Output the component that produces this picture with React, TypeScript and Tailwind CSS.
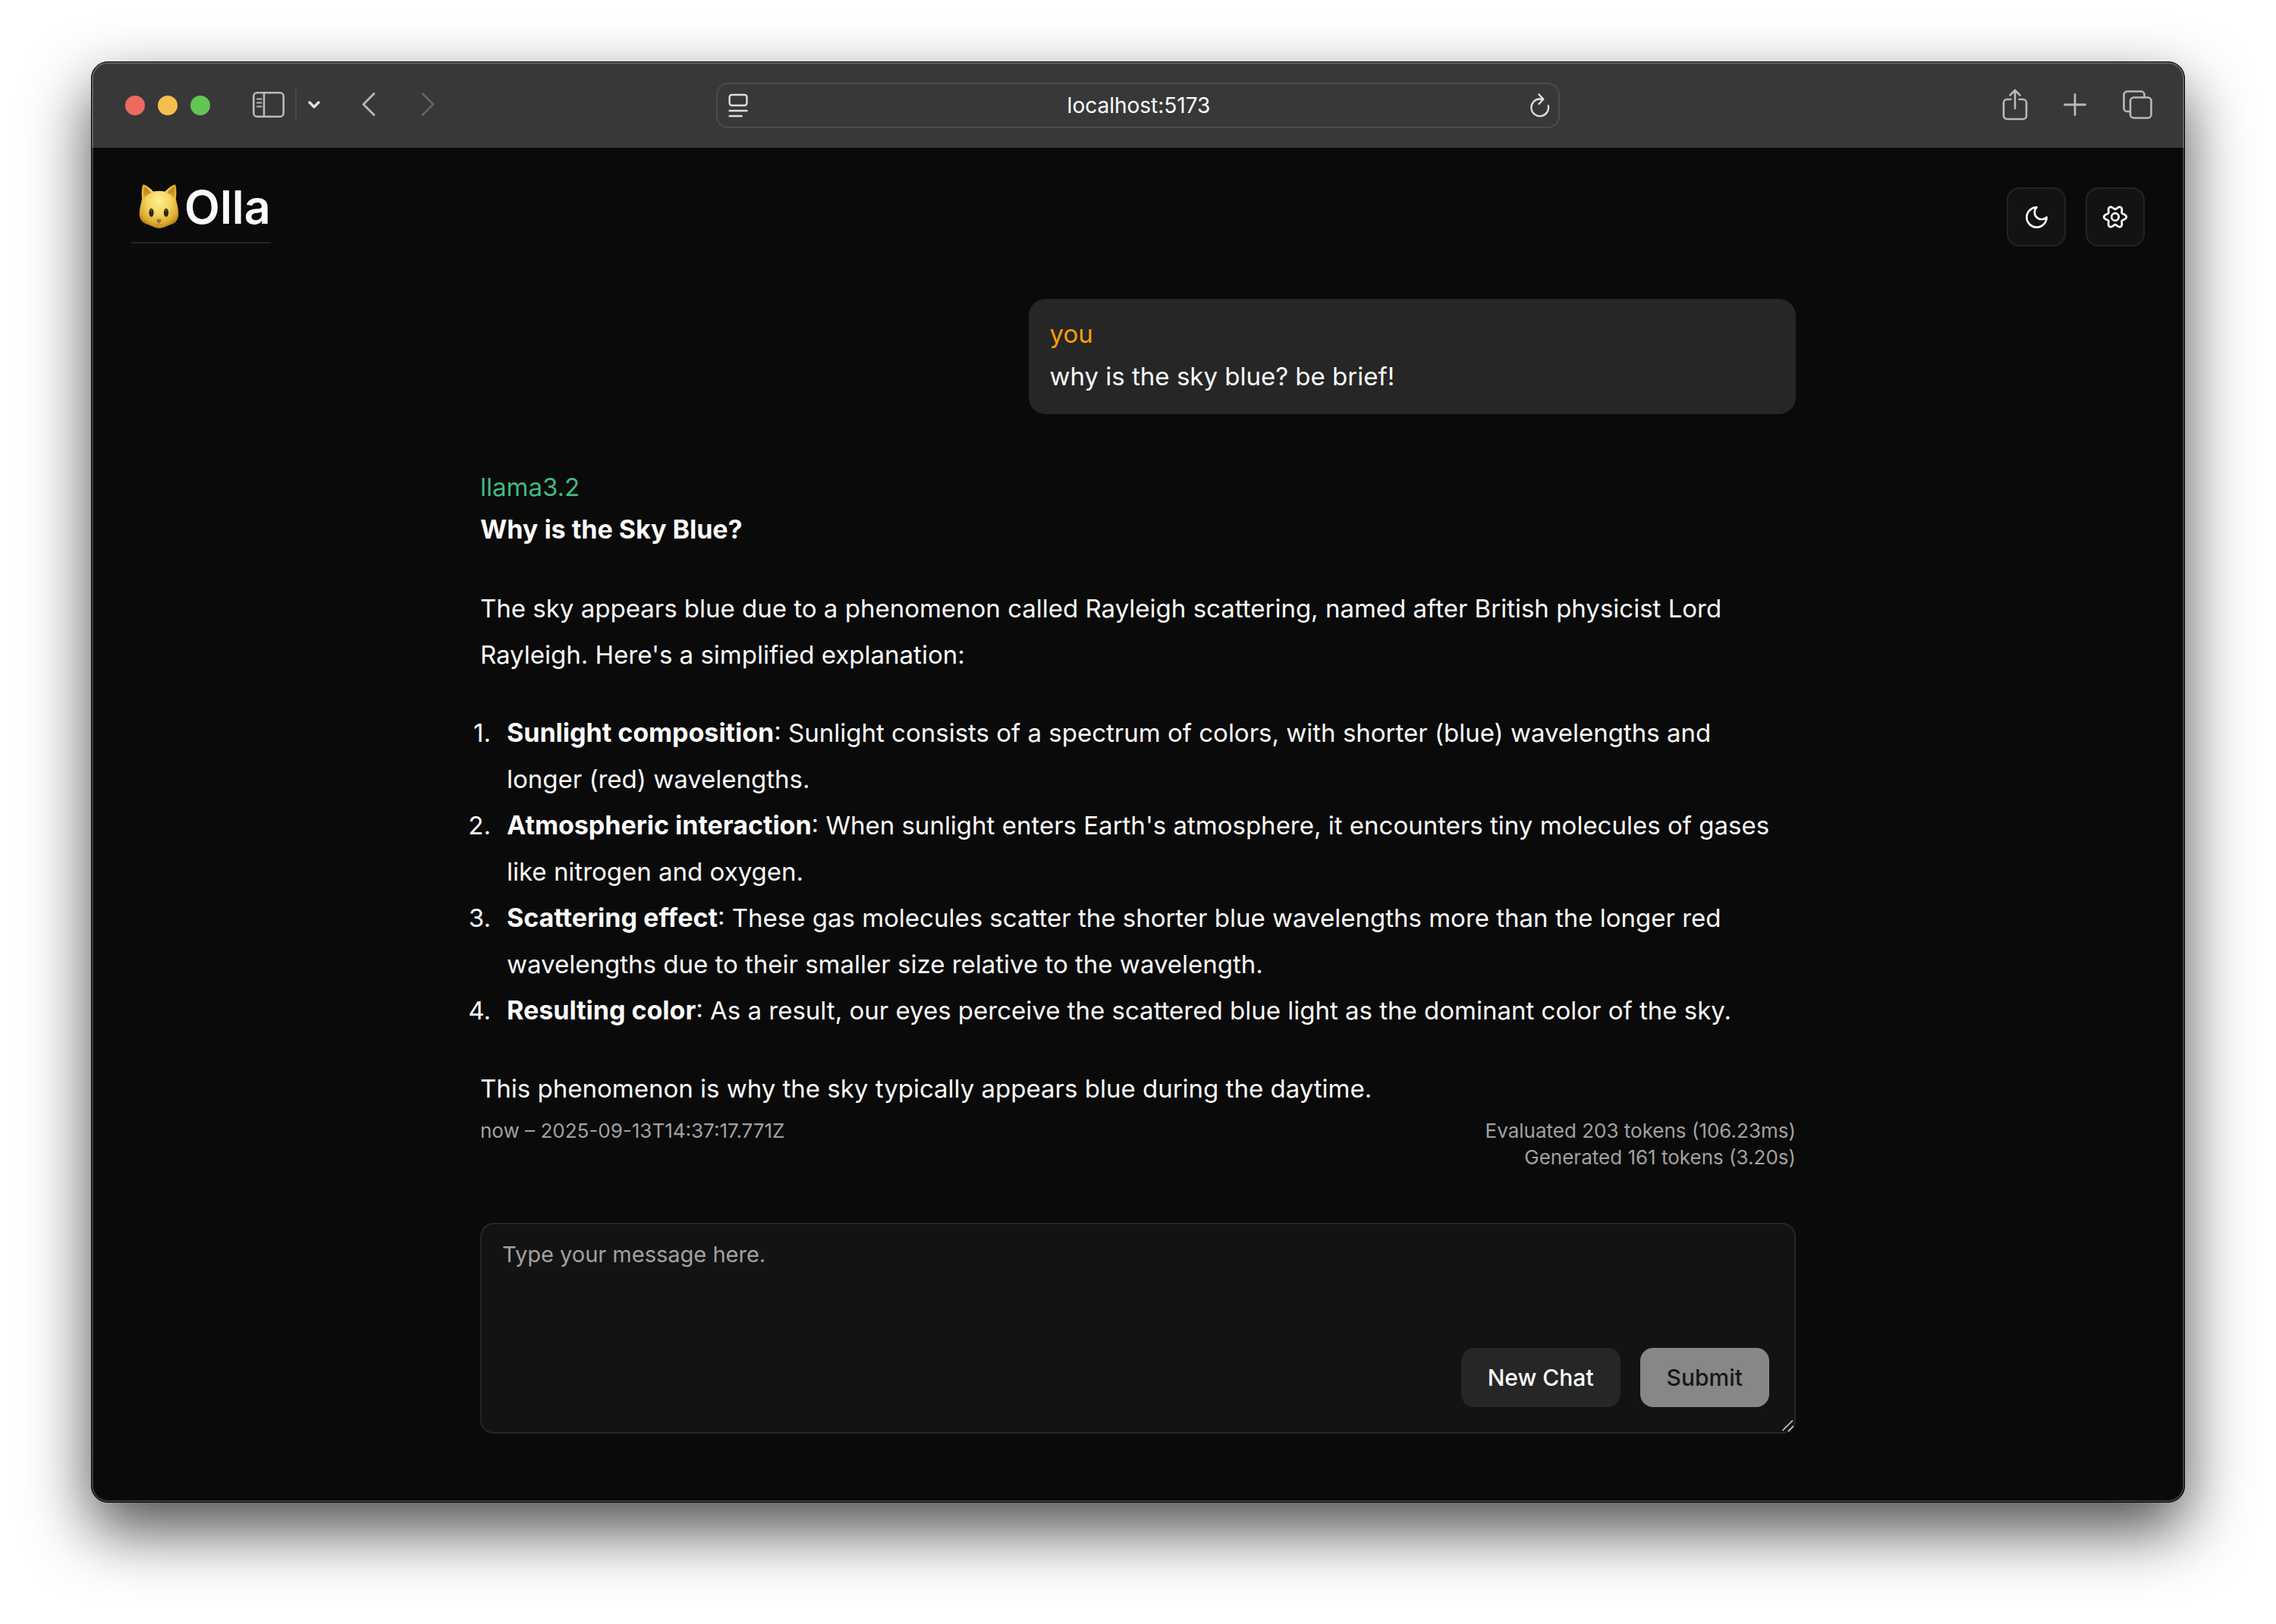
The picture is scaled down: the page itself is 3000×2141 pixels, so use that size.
import React from "react";

const steps = [
  {
    title: "Sunlight composition",
    text: "Sunlight consists of a spectrum of colors, with shorter (blue) wavelengths and longer (red) wavelengths.",
  },
  {
    title: "Atmospheric interaction",
    text: "When sunlight enters Earth's atmosphere, it encounters tiny molecules of gases like nitrogen and oxygen.",
  },
  {
    title: "Scattering effect",
    text: "These gas molecules scatter the shorter blue wavelengths more than the longer red wavelengths due to their smaller size relative to the wavelength.",
  },
  {
    title: "Resulting color",
    text: "As a result, our eyes perceive the scattered blue light as the dominant color of the sky.",
  },
];

/* Six-lobed outline of the settings icon, centred on 17,17. */
const gearPath =
  Array.from({ length: 120 }, (_, i) => {
    const a = (i * Math.PI) / 60;
    const r = 12.5 + 2.3 * Math.cos(6 * a);
    return `${i === 0 ? "M" : "L"}${(17 + r * Math.cos(a)).toFixed(2)} ${(17 + r * Math.sin(a)).toFixed(2)}`;
  }).join("") + "Z";

function CatLogo() {
  return (
    <svg className="h-[54px] w-[58px] overflow-visible" viewBox="0 0 58 54" aria-hidden="true">
      <defs>
        <radialGradient id="catFace" cx="0.5" cy="0.38" r="0.62">
          <stop offset="0" stopColor="#fdf08e" />
          <stop offset="0.5" stopColor="#f3d45c" />
          <stop offset="0.85" stopColor="#dca92e" />
          <stop offset="1" stopColor="#b98220" />
        </radialGradient>
        <linearGradient id="catEar" x1="0" y1="0" x2="0" y2="1">
          <stop offset="0" stopColor="#b87d17" />
          <stop offset="1" stopColor="#d9a835" />
        </linearGradient>
      </defs>
      <path
        d="M7.6-3.6C8.6-4.6 17.5 1 21 5.6C26 4.4 32 4.4 36.6 5.6C40.5 1 49-4.6 50-3.6C51.5-2 52 8 50.8 15C52 21 54.2 28 54.2 35C54.2 42 51 46.5 45.5 48.5C40 50 35 54 29 54C23 54 18.5 50 12.5 48.5C6.5 46.5 2.7 42 2.7 35C2.7 28 5 21 6.2 15C5 8 6-2 7.6-3.6Z"
        fill="url(#catFace)"
      />
      <path d="M9.5-0.5C13 1.5 16.5 4.2 18.5 7C14.5 9 11 11.5 8.8 14.5C8 9 8.3 3.5 9.5-0.5Z" fill="url(#catEar)" />
      <path d="M48.2-0.5C44.7 1.5 41.2 4.2 39.2 7C43.2 9 46.5 11.5 48.7 14.5C49.5 9 49.3 3.5 48.2-0.5Z" fill="url(#catEar)" />
      <ellipse cx="18.5" cy="33.3" rx="3.1" ry="5.5" fill="#2b2510" />
      <ellipse cx="38" cy="33.3" rx="3.1" ry="5.5" fill="#2b2510" />
      <ellipse cx="18.3" cy="30.5" rx="1.2" ry="1.6" fill="#5f5638" />
      <ellipse cx="37.8" cy="30.5" rx="1.2" ry="1.6" fill="#5f5638" />
      <path d="M25.3 43C25.3 41.4 31.7 41.4 31.7 43C31.7 45 29.5 47 28.5 47C27.5 47 25.3 45 25.3 43Z" fill="#8d7443" />
      <path d="M28.5 47C28.5 49 26 50 24 49M28.5 47C28.5 49 31 50 33 49" fill="none" stroke="#b58a2c" strokeWidth="0.9" />
      <path d="M11 44L3.5 49M14 46.5L7 53M46 44L53.5 49M43 46.5L50 53" fill="none" stroke="#6d4f16" strokeWidth="0.7" opacity="0.6" />
    </svg>
  );
}

function Toolbar() {
  return (
    <header className="grid h-[114px] grid-cols-[1fr_minmax(0,1112px)_1fr] items-center border-b border-black bg-[#383838] px-11 text-[#b9b9b9]">
      <div className="flex items-center">
        <div className="flex gap-[17px]">
          <button type="button" aria-label="Close" className="size-[26px] rounded-full bg-[#ed6a5f]" />
          <button type="button" aria-label="Minimize" className="size-[26px] rounded-full bg-[#f5bf4f]" />
          <button type="button" aria-label="Zoom" className="size-[26px] rounded-full bg-[#62c554]" />
        </div>
        <div className="flex items-center pb-0.5">
          <button type="button" aria-label="Sidebar" className="ml-14">
            <svg className="h-[34px] w-[42px]" viewBox="0 0 42 34" fill="none" stroke="currentColor" strokeWidth="2.6">
              <rect x="1.3" y="1.3" width="39.4" height="31.4" rx="4.5" />
              <path d="M15 1v32" />
              <path d="M6 9.5h5.5M6 14.5h5.5M6 19.5h5.5" strokeWidth="2" strokeLinecap="round" />
            </svg>
          </button>
          <span className="ml-3.5 h-10 border-l-2 border-[#4a4a4a]" />
          <button type="button" aria-label="Sidebar menu" className="ml-3.5 text-[#e2e2e2]">
            <svg className="h-3 w-[18px]" viewBox="0 0 18 12" fill="none" stroke="currentColor" strokeWidth="3.4" strokeLinecap="round" strokeLinejoin="round">
              <path d="M3 3l6 6 6-6" />
            </svg>
          </button>
          <button type="button" aria-label="Back" className="ml-[53px]">
            <svg className="h-[34px] w-5" viewBox="0 0 20 34" fill="none" stroke="currentColor" strokeWidth="2.8" strokeLinecap="round" strokeLinejoin="round">
              <path d="M17 2.5L3 16.5 17 30.5" />
            </svg>
          </button>
          <button type="button" aria-label="Forward" disabled className="ml-[58px] text-[#626262]">
            <svg className="h-[34px] w-5" viewBox="0 0 20 34" fill="none" stroke="currentColor" strokeWidth="2.8" strokeLinecap="round" strokeLinejoin="round">
              <path d="M3 2.5l14 14-14 14" />
            </svg>
          </button>
        </div>
      </div>
      <div className="flex h-[60px] items-center rounded-2xl border-2 border-[#4d4d4d] px-3.5 text-[#dedede]">
        <button type="button" aria-label="Page settings">
          <svg className="h-8 w-[26px]" viewBox="0 0 26 32" fill="none" stroke="currentColor" strokeWidth="2.4" strokeLinecap="round">
            <rect x="1.6" y="2" width="22.8" height="14" rx="3" />
            <path d="M1.6 23h22.8M1.6 30h16" />
          </svg>
        </button>
        <input
          aria-label="Address"
          defaultValue="localhost:5173"
          className="min-w-0 flex-1 bg-transparent text-center text-[28px] leading-9 text-white outline-none"
        />
        <button type="button" aria-label="Reload" className="-mr-1">
          <svg className="h-[34px] w-7" viewBox="0 0 28 34" fill="none" stroke="currentColor" strokeWidth="2.4" strokeLinecap="round" strokeLinejoin="round">
            <path d="M24.8 17.5A11.3 11.3 0 1 1 13.5 8.5L18 8.8" />
            <path d="M12.5 2.5L18.3 8.8 12.5 15" />
          </svg>
        </button>
      </div>
      <div className="-mr-0.5 flex items-center justify-end pb-0.5">
        <button type="button" aria-label="Share">
          <svg className="h-[42px] w-[34px]" viewBox="0 0 34 42" fill="none" stroke="currentColor" strokeWidth="2.6" strokeLinecap="round" strokeLinejoin="round">
            <path d="M11.5 14H6.5A4.5 4.5 0 0 0 2 18.5V35.5A4.5 4.5 0 0 0 6.5 40H27.5A4.5 4.5 0 0 0 32 35.5V18.5A4.5 4.5 0 0 0 27.5 14H22.5" />
            <path d="M17 26V2.5M10.5 8.5L17 2 23.5 8.5" />
          </svg>
        </button>
        <button type="button" aria-label="New tab" className="ml-[47px]">
          <svg className="size-[30px]" viewBox="0 0 30 30" fill="none" stroke="currentColor" strokeWidth="2.8" strokeLinecap="round">
            <path d="M15 1.5v27M1.5 15h27" />
          </svg>
        </button>
        <button type="button" aria-label="Tabs" className="ml-12">
          <svg className="h-[38px] w-[39px]" viewBox="0 0 39 38" fill="none" stroke="currentColor" strokeWidth="2.6" strokeLinejoin="round">
            <rect x="10" y="9.5" width="27.5" height="27" rx="4.5" />
            <path d="M10 28H6A4.5 4.5 0 0 1 1.5 23.5V6A4.5 4.5 0 0 1 6 1.5H24A4.5 4.5 0 0 1 28.5 6V9.5" />
          </svg>
        </button>
      </div>
    </header>
  );
}

function IconButton({ label, children }: { label: string; children: React.ReactNode }) {
  return (
    <button
      type="button"
      aria-label={label}
      className="flex size-[78px] items-center justify-center rounded-[17px] border-2 border-[#242424] bg-[#131313] text-white"
    >
      {children}
    </button>
  );
}

export default function App() {
  return (
    <div className="min-h-screen overflow-hidden bg-white px-[120px] pt-[81px] pb-[159px] font-['Inter',sans-serif] text-[#fafafa]">
      <div className="relative overflow-hidden rounded-[22px] border border-black bg-[#0a0a0a] shadow-[0_36px_84px_rgba(0,0,0,0.7)]">
        <Toolbar />

        <div className="flex items-start justify-between px-[52px] pt-[51px]">
          <h1 className="flex items-start gap-1 border-b-2 border-[#242424] pb-[18px] pl-2 text-[61px] leading-[52px] font-semibold">
            <CatLogo />
            <span>Olla</span>
          </h1>
          <div className="flex gap-[26px]">
            <IconButton label="Toggle theme">
              <svg className="size-[35px]" viewBox="0 0 24 24" fill="none" stroke="currentColor" strokeWidth="1.8" strokeLinecap="round" strokeLinejoin="round">
                <path d="M12 3a6 6 0 0 0 9 9 9 9 0 1 1-9-9Z" />
              </svg>
            </IconButton>
            <IconButton label="Settings">
              <svg className="size-[34px]" viewBox="0 0 34 34" fill="none" stroke="currentColor" strokeWidth="2.7" strokeLinejoin="round">
                <path d={gearPath} />
                <circle cx="17" cy="17" r="4.8" />
              </svg>
            </IconButton>
          </div>
        </div>

        <main className="mx-auto max-w-[1734px] pt-[69px] pb-[90px] text-[33px]">
          <section className="ml-auto w-7/12 rounded-[22px] bg-[#262626] px-7 pt-[18px] pb-[22px] leading-[56px]">
            <p className="text-[#f59e0b]">you</p>
            <p>why is the sky blue? be brief!</p>
          </section>

          <article className="mt-[68px] leading-[61px]">
            <p className="leading-[56px] text-[#41b883]">llama3.2</p>
            <p className="text-[34px] leading-[56px] font-bold">Why is the Sky Blue?</p>
            <p className="mt-[46px]">
              The sky appears blue due to a phenomenon called Rayleigh scattering, named after British physicist Lord
              Rayleigh. Here's a simplified explanation:
            </p>
            <ol className="my-[42px] -ml-5 pr-5">
              {steps.map((s, i) => (
                <li key={s.title} className="flex gap-[21px]">
                  <span className="w-[34px] shrink-0 text-right">{i + 1}.</span>
                  <p>
                    <strong className="text-[34px] leading-none font-bold">{s.title}</strong>: {s.text}
                  </p>
                </li>
              ))}
            </ol>
            <p>This phenomenon is why the sky typically appears blue during the daytime.</p>
            <footer className="mt-[7px] flex justify-between text-[26px] leading-[35px] text-[#a1a1a1]">
              <span>now – 2025-09-13T14:37:17.771Z</span>
              <div className="text-right">
                <p>Evaluated 203 tokens (106.23ms)</p>
                <p>Generated 161 tokens (3.20s)</p>
              </div>
            </footer>
          </article>

          <form className="relative mt-[69px]" onSubmit={(e) => e.preventDefault()}>
            <textarea
              aria-label="Message"
              placeholder="Type your message here."
              className="block h-[278px] w-full resize-none rounded-[18px] border-2 border-[#262626] bg-[#131313] px-[27px] py-5 text-[29px] leading-10 outline-none placeholder:text-[#a1a1a1]"
            />
            <div className="absolute right-[35px] bottom-[35px] flex gap-[26px] text-[30px] font-medium">
              <button type="button" className="h-[78px] rounded-[17px] bg-[#262626] px-[35px]">
                New Chat
              </button>
              <button type="submit" className="h-[78px] rounded-[17px] bg-[#878787] px-[35px] text-[#171717]">
                Submit
              </button>
            </div>
            <svg className="absolute right-0.5 bottom-0.5 size-4" viewBox="0 0 16 16" fill="none" stroke="#b5b5b5" strokeWidth="1.8" aria-hidden="true">
              <path d="M0.5 14L14 0.5M8 15L15 8" />
            </svg>
          </form>
        </main>

        <div className="pointer-events-none absolute inset-0 rounded-[21px] shadow-[inset_0_0_0_2px_rgba(255,255,255,0.22)]" />
      </div>
    </div>
  );
}
